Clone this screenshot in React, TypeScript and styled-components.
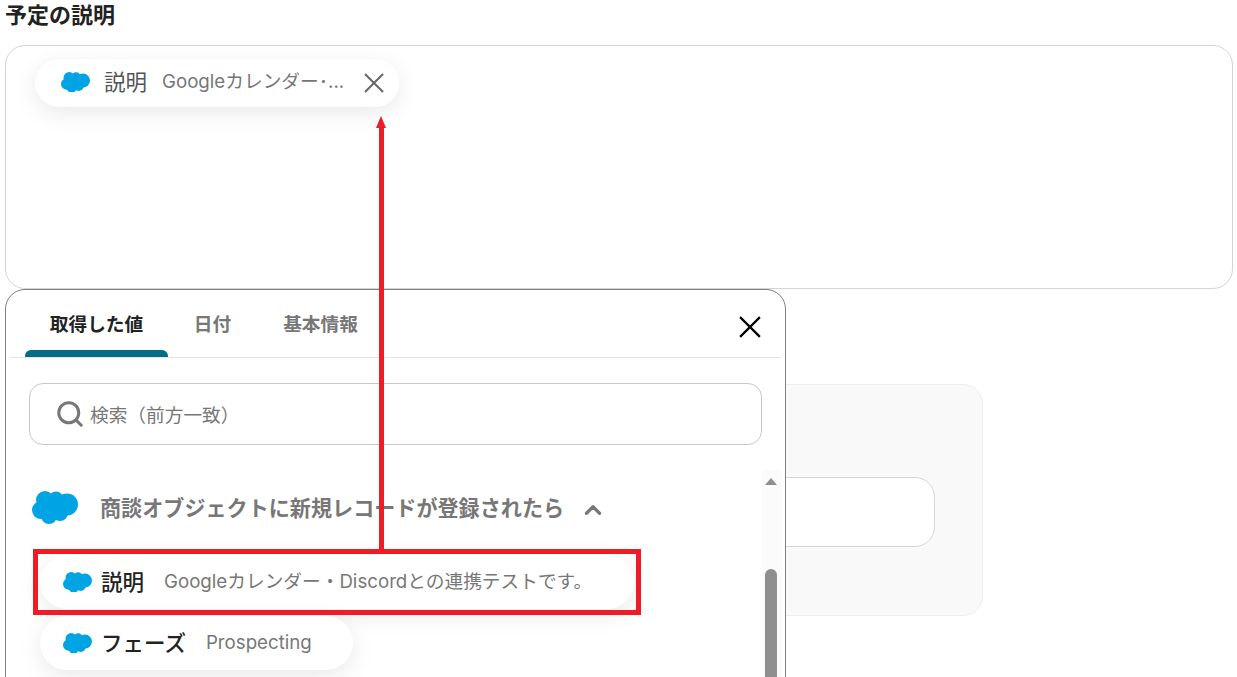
import React from 'react';
import styled, { createGlobalStyle } from 'styled-components';
import { ChevronUp, Search } from 'lucide-react';

const GlobalStyle = createGlobalStyle`
  html, body {
    margin: 0;
    height: 677px;
    overflow: hidden;
    background: #fff;
    font-family: "Inter", "Noto Sans CJK JP", sans-serif;
    color: #222;
  }
`;

const Page = styled.div`
  position: relative;
  height: 677px;
  overflow: hidden;
  padding: 0 4px 0 5px;
  box-sizing: border-box;
`;

const Title = styled.div`
  height: 45px;
  padding-top: 1px;
  font-size: 22px;
  line-height: 28px;
  font-weight: 700;
  box-sizing: border-box;
`;

const DescriptionBox = styled.div`
  height: 244px;
  border: 1px solid #d2d4d8;
  border-radius: 20px;
  box-sizing: border-box;
  padding: 13px 29px;
`;

const Chip = styled.div<{ $width: number; $height: number; $pad: number; $lift?: number }>`
  display: flex;
  align-items: center;
  width: ${(p) => p.$width}px;
  height: ${(p) => p.$height}px;
  padding-left: ${(p) => p.$pad}px;
  padding-bottom: ${(p) => p.$lift ?? 0}px;
  box-sizing: border-box;
  border-radius: 27px;
  background: #fff;
  box-shadow: 0 6px 24px rgba(0, 0, 0, 0.09);
`;

const ChipName = styled.span<{ $strong?: boolean }>`
  margin-left: ${(p) => (p.$strong ? 9 : 14)}px;
  font-size: 21.5px;
  line-height: 28px;
  font-weight: ${(p) => (p.$strong ? 500 : 400)};
  color: ${(p) => (p.$strong ? '#222' : '#555')};
  white-space: nowrap;
`;

const ChipValue = styled.span<{ $gap: number }>`
  margin-left: ${(p) => p.$gap}px;
  font-size: 18.7px;
  line-height: 28px;
  color: #777;
  white-space: nowrap;
`;

const ChipClose = styled.span`
  display: flex;
  margin-left: auto;
  padding: 2px 15px 0 0;
  color: #666;
`;

const BackPanel = styled.div`
  width: 978px;
  height: 232px;
  margin-top: 95px;
  background: #f9f9f9;
  border: 1px solid #eceef0;
  border-radius: 20px;
  box-sizing: border-box;
  padding: 92px 47px 0 0;
`;

const BackInput = styled.div`
  height: 68px;
  background: #fff;
  border: 1px solid #d2d6de;
  border-radius: 20px;
`;

const Popup = styled.div`
  position: absolute;
  left: 5px;
  top: 289px;
  width: 781px;
  height: 420px;
  box-sizing: border-box;
  background: #fff;
  border: 1px solid #7f7f7f;
  border-radius: 20px;
`;

const TabBar = styled.div`
  display: flex;
  align-items: flex-start;
  position: relative;
  height: 67px;
  margin: 0 4px;
  padding-left: 15px;
  border-bottom: 1px solid #e4e4e4;
`;

const Tab = styled.div<{ $active?: boolean; $width: number }>`
  position: relative;
  width: ${(p) => p.$width}px;
  height: 67px;
  box-sizing: border-box;
  padding-top: 21px;
  text-align: center;
  font-size: 18.7px;
  line-height: 28px;
  font-weight: 700;
  white-space: nowrap;
  color: ${(p) => (p.$active ? '#222' : '#777')};
  ${(p) =>
    p.$active &&
    `&::after {
      content: '';
      position: absolute;
      left: 0;
      right: 0;
      bottom: 0;
      height: 7px;
      background: #056c85;
      border-radius: 6px 6px 0 0;
    }`}
`;

const CloseButton = styled.span`
  position: absolute;
  right: 20px;
  top: 26px;
  display: flex;
  color: #000;
`;

const SearchBox = styled.div`
  display: flex;
  align-items: center;
  height: 62px;
  margin: 25px 23px 0 23px;
  padding-left: 25px;
  box-sizing: border-box;
  border: 1px solid #c8c8c8;
  border-radius: 14px;
  color: #777;
  font-size: 18.7px;
`;

const SearchText = styled.span`
  margin-left: 5px;
  padding-bottom: 2px;
`;

const ListArea = styled.div`
  position: relative;
  display: flex;
  flex-direction: column;
  height: 250px;
  padding: 46px 0 0 26px;
`;

const SectionHeader = styled.div`
  display: flex;
  align-items: center;
  height: 34px;
  margin-bottom: 30px;
  font-size: 21.1px;
  font-weight: 700;
  color: #777;
`;

const SectionText = styled.span`
  margin-left: 22px;
  padding-bottom: 2px;
  white-space: nowrap;
`;

const SectionChevron = styled.span`
  display: flex;
  margin: 3px 0 0 16px;
  color: #777;
`;

const RowList = styled.div`
  display: flex;
  flex-direction: column;
  gap: 7px;
  margin-left: 8px;
`;

const ScrollTrack = styled.div`
  position: absolute;
  right: 3px;
  top: 25px;
  bottom: 0;
  width: 20px;
  background: #fbfbfb;
`;

const ScrollArrow = styled.div`
  position: absolute;
  top: 8px;
  left: 3px;
  width: 0;
  height: 0;
  border-left: 6px solid transparent;
  border-right: 6px solid transparent;
  border-bottom: 7px solid #8f8f8f;
`;

const ScrollThumb = styled.div`
  position: absolute;
  top: 99px;
  left: 3px;
  width: 12px;
  height: 200px;
  background: #8f8f8f;
  border-radius: 6px;
`;

const RedFrame = styled.div`
  position: absolute;
  left: 33px;
  top: 549px;
  width: 608px;
  height: 66px;
  box-sizing: border-box;
  border: 5px solid #ee1c27;
`;

const RedLine = styled.div`
  position: absolute;
  left: 379px;
  top: 124px;
  width: 5px;
  height: 426px;
  background: #ee1c27;
`;

const RedHead = styled.div`
  position: absolute;
  left: 376px;
  top: 116px;
  width: 0;
  height: 0;
  border-left: 5.5px solid transparent;
  border-right: 5.5px solid transparent;
  border-bottom: 12px solid #ee1c27;
`;

const CrossIcon = ({ size, stroke }: { size: number; stroke: number }) => (
  <svg width={size} height={size} viewBox="0 0 20 20" fill="none" stroke="currentColor" strokeWidth={stroke}>
    <path d="M1 1 L19 19 M19 1 L1 19" />
  </svg>
);

const CloudLogo = ({ width }: { width: number }) => (
  <svg width={width} height={width * 0.72} viewBox="0 0 46 33" fill="#00a4e4" style={{ flexShrink: 0 }}>
    <circle cx="13" cy="9" r="9" />
    <circle cx="24" cy="8" r="7.5" />
    <circle cx="35" cy="13.5" r="11" />
    <circle cx="9" cy="19" r="9" />
    <circle cx="17" cy="25" r="8" />
    <circle cx="28" cy="22" r="8" />
    <rect x="10" y="10" width="26" height="14" />
  </svg>
);

const App = () => (
  <>
    <GlobalStyle />
    <Page>
      <Title>予定の説明</Title>
      <DescriptionBox>
        <Chip $width={364} $height={48} $pad={26} $lift={2}>
          <CloudLogo width={29} />
          <ChipName>説明</ChipName>
          <ChipValue $gap={15}>Googleカレンダー･...</ChipValue>
          <ChipClose>
            <CrossIcon size={20} stroke={2} />
          </ChipClose>
        </Chip>
      </DescriptionBox>
      <BackPanel>
        <BackInput />
      </BackPanel>

      <Popup>
        <TabBar>
          <Tab $active $width={143}>取得した値</Tab>
          <Tab $width={89}>日付</Tab>
          <Tab $width={127}>基本情報</Tab>
          <CloseButton>
            <CrossIcon size={22} stroke={2} />
          </CloseButton>
        </TabBar>
        <SearchBox>
          <Search size={30} strokeWidth={2.4} />
          <SearchText>検索（前方一致）</SearchText>
        </SearchBox>
        <ListArea>
          <SectionHeader>
            <CloudLogo width={46} />
            <SectionText>商談オブジェクトに新規レコードが登録されたら</SectionText>
            <SectionChevron>
              <ChevronUp size={26} strokeWidth={3} />
            </SectionChevron>
          </SectionHeader>
          <RowList>
            <Chip $width={594} $height={54} $pad={23}>
              <CloudLogo width={29} />
              <ChipName $strong>説明</ChipName>
              <ChipValue $gap={20}>Googleカレンダー・Discordとの連携テストです。</ChipValue>
            </Chip>
            <Chip $width={313} $height={54} $pad={23}>
              <CloudLogo width={29} />
              <ChipName $strong>フェーズ</ChipName>
              <ChipValue $gap={20}>Prospecting</ChipValue>
            </Chip>
          </RowList>
          <ScrollTrack>
            <ScrollArrow />
            <ScrollThumb />
          </ScrollTrack>
        </ListArea>
      </Popup>

      <RedFrame />
      <RedLine />
      <RedHead />
    </Page>
  </>
);

export default App;
